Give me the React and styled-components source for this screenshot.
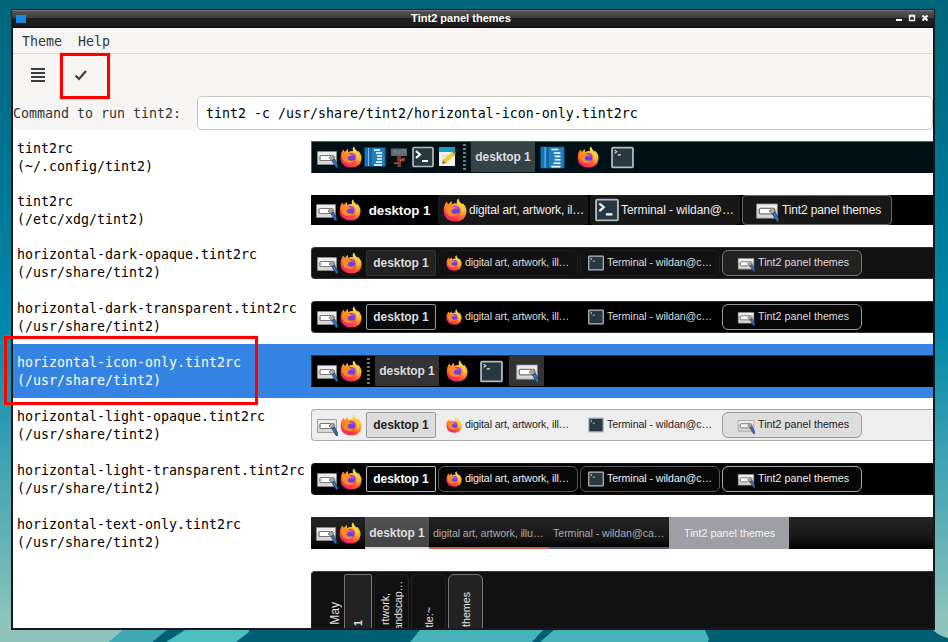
import React from "react";
import styled, { createGlobalStyle, css } from "styled-components";

const Global = createGlobalStyle`
  * { box-sizing: border-box; }
  body { margin: 0; overflow: hidden; }
`;

const Desktop = styled.div`
  position: relative;
  width: 948px;
  height: 642px;
  padding: 9px 13px 12px 11px;
  overflow: hidden;
  background: linear-gradient(#00667a 0, #007291 140px, #0089ab 330px, #3ba0b2 450px, #6db5b8 560px, #8ec4bb 620px);
`;

const Art = styled.svg`
  position: absolute;
  left: 0;
  bottom: 0;
`;

const Window = styled.div`
  position: relative;
  width: 924px;
  height: 621px;
  display: flex;
  flex-direction: column;
  border: solid #191919;
  border-width: 1px 2px 2px;
  background: #f6f5f3;
`;

const TitleBar = styled.div`
  flex: none;
  display: grid;
  grid-template-columns: 42px 1fr 42px;
  align-items: center;
  height: 18px;
  padding: 0 2px 0 3px;
  margin: 0 -1px;
  background: linear-gradient(#777 0 1px, #555 1px, #3c3c3c 8px, #202020 8px, #1c1c1c 16px, #111 16px);
`;

const AppMark = styled.span`
  width: 10px;
  height: 8px;
  margin-left: 1px;
  background: #1b87e5;
`;

const Title = styled.span`
  margin-top: -3px;
  padding-right: 25px;
  text-align: center;
  color: #fff;
  font: bold 11px/14px "Liberation Sans", sans-serif;
  letter-spacing: 0.02px;
`;

const WindowButtons = styled.svg`
  display: block;
  width: 42px;
  height: 18px;
`;

const mono = css`
  font-family: "DejaVu Sans Mono", monospace;
  font-size: 13.29px;
  line-height: 18px;
  white-space: pre;
`;

const MenuBar = styled.div`
  flex: none;
  display: flex;
  align-items: center;
  gap: 16px;
  height: 26px;
  padding: 2px 0 0 9px;
  border-bottom: 1px solid #d9d7d4;
  color: #32373a;
  ${mono}
`;

const ToolBar = styled.div`
  flex: none;
  display: flex;
  align-items: center;
  gap: 29px;
  height: 42px;
  padding-left: 18px;
`;

const CommandRow = styled.div`
  flex: none;
  display: flex;
  align-items: center;
  justify-content: space-between;
  height: 34px;
  color: #32373a;
  ${mono}
`;

const CommandLabel = styled.span`
  padding-top: 2px;
`;

const CommandField = styled.div`
  width: 736px;
  height: 34px;
  padding: 8px 8px 6px;
  border: 1px solid #cdc7c2;
  border-radius: 5px;
  background: #fff;
  color: #000;
`;

const List = styled.div`
  flex: 1;
  min-height: 0;
  overflow: hidden;
  background: #fff;
`;

const Row = styled.div`
  display: flex;
  align-items: center;
  height: ${(p) => p.$h || 54}px;
  padding-left: 4px;
  background: ${(p) => (p.$selected ? "#3584e4" : "#fff")};
  color: ${(p) => (p.$selected ? "#fff" : "#000")};
`;

const Name = styled.div`
  flex: none;
  width: 294px;
  padding-top: 2px;
  ${mono}
`;

const Panel = styled.div`
  flex: 1;
  display: flex;
  align-items: center;
  height: ${(p) => p.$h || 32}px;
  padding-left: ${(p) => p.$pad || 5}px;
  background: ${(p) => p.$bg || "#000"};
  border-top: 1px solid ${(p) => p.$line || "transparent"};
  border-bottom: 1px solid ${(p) => p.$lineBottom || p.$line || "transparent"};
  border-left: 1px solid ${(p) => p.$line || "transparent"};
  border-radius: ${(p) => p.$radius || 0}px 0 0 ${(p) => p.$radius || 0}px;
  font-family: "Liberation Sans", sans-serif;
`;

const Launchers = styled.div`
  display: flex;
  gap: 2px;
`;

const Glyph = styled.svg`
  flex: none;
  display: block;
  width: ${(p) => p.$s || 22}px;
  height: ${(p) => p.$s || 22}px;
`;

const Dots = styled.div`
  width: 3px;
  height: 30px;
  margin: 0 5px 0 ${(p) => p.$ml}px;
  background: repeating-linear-gradient(transparent 0 2px, #777 2px 4px);
`;

const Pager = styled.div`
  flex: none;
  width: ${(p) => p.$w || 64}px;
  height: ${(p) => p.$h || 30}px;
  margin-left: ${(p) => p.$ml || 0}px;
  display: flex;
  align-items: center;
  justify-content: center;
  background: ${(p) => p.$bg || "transparent"};
  border: ${(p) => (p.$line ? `1px solid ${p.$line}` : "0")};
  border-radius: ${(p) => (p.$line ? 2 : 0)}px;
  color: ${(p) => p.$fg || "#ddd"};
  font-size: ${(p) => p.$size || 12}px;
  font-weight: bold;
  letter-spacing: -0.08px;
  white-space: nowrap;
`;

const Task = styled.div`
  flex: none;
  width: ${(p) => p.$w || 140}px;
  height: ${(p) => p.$h || 26}px;
  margin-left: 2px;
  padding-left: ${(p) => (p.$pl ?? 7)}px;
  display: flex;
  align-items: center;
  gap: ${(p) => p.$gap ?? 3}px;
  background: ${(p) => p.$bg || "transparent"};
  border: 1px solid ${(p) => p.$line || "transparent"};
  border-radius: ${(p) => p.$radius || 6}px;
  color: ${(p) => p.$fg || "#ddd"};
  font-size: ${(p) => p.$size || 10.67}px;
  white-space: nowrap;
`;

const Label = styled.span`
  padding-bottom: ${(p) => p.$lift ?? 2}px;
  letter-spacing: ${(p) => p.$track || 0}px;
`;

const IconCell = styled.div`
  flex: none;
  width: 35px;
  height: 30px;
  display: flex;
  align-items: center;
  justify-content: center;
  background: ${(p) => (p.$on ? "#333" : "transparent")};
`;

const TextTask = styled.div`
  flex: none;
  width: 120px;
  height: 32px;
  padding: 1px 0 0 ${(p) => p.$pl}px;
  display: flex;
  align-items: center;
  border-bottom: 2px solid ${(p) => p.$line};
  background: ${(p) => p.$bg || "transparent"};
  color: ${(p) => p.$fg || "#aaa"};
  font-size: 10.67px;
  white-space: nowrap;
`;

const VPanel = styled.div`
  flex: 1;
  align-self: flex-start;
  display: flex;
  align-items: flex-start;
  gap: 2px;
  height: 70px;
  margin-top: 11px;
  padding: 2px 0 0 16px;
  background: #111;
  border-top: 1px solid #383c3a;
  border-left: 1px solid #222;
  border-radius: 4px 0 0 0;
  font-family: "Liberation Sans", sans-serif;
`;

const VCell = styled.div`
  flex: none;
  display: flex;
  justify-content: center;
  gap: 1px;
  width: ${(p) => p.$w}px;
  height: 70px;
  border: 1px solid ${(p) => p.$line || "transparent"};
  border-radius: ${(p) => p.$radius || 6}px;
  background: ${(p) => p.$bg || "transparent"};
`;

const VText = styled.span`
  writing-mode: vertical-rl;
  transform: rotate(180deg);
  align-self: flex-start;
  margin-top: ${(p) => p.$top}px;
  color: #e4e4e4;
  font-size: ${(p) => p.$size || 10.67}px;
  font-weight: ${(p) => (p.$bold ? "bold" : "normal")};
  letter-spacing: ${(p) => p.$track || 0}px;
  line-height: 12px;
  white-space: nowrap;
`;

const Marker = styled.div`
  position: absolute;
  left: ${(p) => p.$x}px;
  top: ${(p) => p.$y}px;
  width: ${(p) => p.$w}px;
  height: ${(p) => p.$h}px;
  border: 3px solid #fe0000;
  box-shadow: 0 0 1px #ff7777;
`;

const Tint = ({ s }) => (
  <Glyph $s={s} viewBox="0 0 22 22">
    <path d="M1.500 5.500h19v13h-19z" fill="#d8d8d8" stroke="#8d8d8d" strokeWidth=".8" />
    <path d="M2 6h18v4H2z" fill="#ececec" />
    <rect x="4" y="9.500" width="14" height="5" rx="1" fill="#fff" stroke="#797979" strokeWidth="1.200" />
    <path d="m13 12 2.500-2.500 3 3-2 2.500z" fill="#aaa" stroke="#67625c" strokeWidth=".8" />
    <path d="m16 14.500 2.500-1.500 3 6v2.500h-1.500z" fill="#3f6fb5" stroke="#193b70" strokeWidth=".8" />
    <path d="m15 9 2 2.500" stroke="#d79a70" />
  </Glyph>
);

const Fox = ({ s }) => (
  <Glyph $s={s} viewBox="0 0 22 22">
    <defs>
      <linearGradient id="foxBody" x1=".85" y1="0" x2=".25" y2="1">
        <stop offset="0" stopColor="#fff44f" />
        <stop offset=".4" stopColor="#ffa62a" />
        <stop offset=".72" stopColor="#ff4a38" />
        <stop offset="1" stopColor="#f01784" />
      </linearGradient>
    </defs>
    <path d="M3 3.500 5 6Q6 4 8 3v3q3-1.500 5-1Q12 2 14 .500q.500 3 3.500 5l1-.500Q22 9 21.500 13 20.500 21.500 11.500 21.500 2 21.500 .6 13 .2 8 3 3.500z" fill="url(#foxBody)" />
    <circle cx="11" cy="11.500" r="4.500" fill="#7040df" />
    <path d="M10 8q4-2 6 2-2-1-3 1-3-1-3-3z" fill="#b346e8" />
    <path d="M2 8.500q3-2.500 6-1.500l4 2-3.500 1.500-1 2q1.500 3.500 6 1.500-.500 3-5 3-6-.500-6.500-8.500z" fill="#ff8a22" />
    <path d="M14 .500q.500 5 4.500 8 1.500 5-1.500 8 2-5-1-9-3.500-3-2-7z" fill="#ffdb3d" />
  </Glyph>
);

const Term = ({ s, big }) => (
  <Glyph $s={s} viewBox="0 0 22 22">
    <rect x="1" y="1.500" width="20" height="19" rx="1" fill="#263842" stroke="#b5babd" strokeWidth="1.700" />
    {big ? (
      <path d="m4 5 4 3.500L4 12M10 15h6" fill="none" stroke="#fff" strokeWidth="2" />
    ) : (
      <path d="m3.500 4 2 1.500-2 1.500M6.500 8.500h3" fill="none" stroke="#dce4e6" strokeWidth="1" />
    )}
  </Glyph>
);

const Files = ({ s }) => (
  <Glyph $s={s} viewBox="0 0 22 22">
    <path d="M.5 1.500h21v19H.5z" fill="#1674b8" />
    <path d="M4.500 2v18" stroke="#79b9e4" />
    <path d="M7 2.500h13v17H7z" fill="#2480bd" />
    <path d="M10 4h6M12 7h6M13 10h5M13 13h5M12 16h6M10 19h8" stroke="#fff" strokeWidth="1.400" />
    <path d="M7 2v18" stroke="#0c5589" />
  </Glyph>
);

const Sign = () => (
  <Glyph viewBox="0 0 22 22">
    <path d="M3 2.500h16v7.500H3z" fill="#62696e" />
    <path d="m5 8 2-4 2 4m2-4v4m3-4v4m0-4h3v3" fill="none" stroke="#858c90" strokeWidth=".8" />
    <path d="M9.500 10h3.500v11H9.500z" fill="#6b4530" />
    <path d="M9 12h8v3H9z" fill="#7b3a2a" />
    <path d="m6 17 4 .500m2-3 4-1" stroke="#e44a20" strokeWidth="1.500" />
  </Glyph>
);

const Note = () => (
  <Glyph viewBox="0 0 22 22">
    <path d="M3 2h16v18H3z" fill="#f2f1eb" />
    <path d="M3 1h16v5H3z" fill="#189dc1" />
    <path d="M6 10h8M6 13h6" stroke="#ccc" />
    <path d="m6 18 1-4 9-8 3 3-9 8z" fill="#f0cd2b" />
    <path d="m6 18 1-4 3 3zM16 6l2-1 2 2-1 2z" fill="#8a7a5c" />
  </Glyph>
);

const Pair = () => (
  <Launchers>
    <Tint />
    <Fox />
  </Launchers>
);

function Entry({ name, path, h, selected, children }) {
  return (
    <Row $h={h} $selected={selected}>
      <Name>
        {name}
        {"\n"}
        {path}
      </Name>
      {children}
    </Row>
  );
}

function ThreeTasks({ bg, line, pager, pagerLine, task, taskLine, active, activeLine, fg, pagerFg }) {
  return (
    <Panel $pad={4} $bg={bg} $line={line} $radius={4}>
      <Pair />
      <Pager $w={70} $h={26} $ml={4} $bg={pager} $line={pagerLine} $fg={pagerFg}>desktop 1</Pager>
      <Task $bg={task} $line={taskLine} $fg={fg}>
        <Fox s={16} />
        <Label $track={-0.14}>digital art, artwork, ill…</Label>
      </Task>
      <Task $bg={task} $line={taskLine} $fg={fg}>
        <Term s={16} />
        <Label $track={-0.08}>Terminal - wildan@c…</Label>
      </Task>
      <Task $bg={active} $line={activeLine} $fg={fg} $pl={14}>
        <Tint s={18} />
        <Label $track={0.05}>Tint2 panel themes</Label>
      </Task>
    </Panel>
  );
}

export default function App() {
  const share = "(/usr/share/tint2)";
  return (
    <Desktop>
      <Global />
      <Art width="948" height="14" viewBox="0 628 948 14">
        <path d="M126 628h809v2l13 8v4H109z" fill="#005e73" />
        <path d="M123 630h44l-15 12h-43z" fill="#3fa8b0" />
        <path d="M185 630h64v2l-13 10h-70z" fill="#4ebfc0" />
        <path d="M420 630h285l4 9-1 3H410z" fill="#45b3b8" />
        <path d="M543 630h11l-14 12h-8z" fill="#005e73" />
        <path d="M933 630h15v8q-9-2-15-8z" fill="#8ec4bb" />
      </Art>
      <Window>
        <TitleBar>
          <AppMark />
          <Title>Tint2 panel themes</Title>
          <WindowButtons viewBox="0 0 42 18">
            <path d="M6 10h6" stroke="#fff" strokeWidth="2" />
            <path d="M19.500 5.500h5v5h-5zM19 6h6" fill="none" stroke="#fff" strokeWidth="1.300" />
            <path d="m32.500 5.500 5 5m0-5-5 5" stroke="#fff" strokeWidth="2" />
          </WindowButtons>
        </TitleBar>
        <MenuBar>
          <span>Theme</span>
          <span>Help</span>
        </MenuBar>
        <ToolBar>
          <Glyph $s={14} viewBox="0 0 14 14">
            <path d="M0 1h14M0 5h14M0 9h14M0 13h14" stroke="#3d3d3d" strokeWidth="2" />
          </Glyph>
          <Glyph $s={14} viewBox="0 0 14 14">
            <path d="m1.500 7.500 3.500 3.500 7-8" fill="none" stroke="#3d3d3d" strokeWidth="2.200" />
          </Glyph>
        </ToolBar>
        <CommandRow>
          <CommandLabel>Command to run tint2:</CommandLabel>
          <CommandField>tint2 -c /usr/share/tint2/horizontal-icon-only.tint2rc</CommandField>
        </CommandRow>
        <List>
          <Entry name="tint2rc" path="(~/.config/tint2)">
            <Panel $bg="#001014" $line="#526762" $lineBottom="#001014" $pad={4}>
              <Launchers><Tint /><Fox /><Files /><Sign /><Term big /><Note /></Launchers>
              <Dots $ml={5} />
              <Pager $bg="#354246">desktop 1</Pager>
              <IconCell><Files s={25} /></IconCell>
              <IconCell><Fox s={22} /></IconCell>
              <IconCell><Term s={23} /></IconCell>
            </Panel>
          </Entry>
          <Entry name="tint2rc" path="(/etc/xdg/tint2)" h={52}>
            <Panel $h={30} $pad={3}>
              <Pair />
              <Pager $w={73} $ml={2} $fg="#fff" $size={13.33}>desktop 1</Pager>
              <Task $w={150} $h={30} $bg="#171717" $line="#1d1d1d" $radius={4} $size={12} $pl={4} $gap={2} $fg="#eee">
                <Fox s={24} />
                <Label $lift={0} $track={-0.14}>digital art, artwork, il…</Label>
              </Task>
              <Task $w={150} $h={30} $bg="#171717" $line="#1d1d1d" $radius={4} $size={12} $pl={4} $gap={2} $fg="#eee">
                <Term s={24} big />
                <Label $lift={0} $track={-0.07}>Terminal - wildan@…</Label>
              </Task>
              <Task $w={150} $h={30} $bg="#171717" $line="#666" $radius={4} $size={12} $pl={12} $gap={3} $fg="#eee">
                <Tint s={24} />
                <Label $lift={0} $track={-0.14}>Tint2 panel themes</Label>
              </Task>
            </Panel>
          </Entry>
          <Entry name="horizontal-dark-opaque.tint2rc" path={share}>
            <ThreeTasks bg="#111" line="#333" pager="#222" pagerLine="#333" taskLine="#1d1d1d" active="#222" activeLine="#777" />
          </Entry>
          <Entry name="horizontal-dark-transparent.tint2rc" path={share}>
            <ThreeTasks bg="#000" line="#333" pager="#080808" pagerLine="#999" active="#080808" activeLine="#999" />
          </Entry>
          <Entry name="horizontal-icon-only.tint2rc" path={share} selected>
            <Panel $line="#333" $lineBottom="#000" $pad={4}>
              <Pair />
              <Dots $ml={5} />
              <Pager $bg="#333">desktop 1</Pager>
              <IconCell><Fox s={22} /></IconCell>
              <IconCell><Term s={23} /></IconCell>
              <IconCell $on><Tint s={24} /></IconCell>
            </Panel>
          </Entry>
          <Entry name="horizontal-light-opaque.tint2rc" path={share}>
            <ThreeTasks bg="#eee" line="#aaa" pager="#ddd" pagerLine="#999" active="#ddd" activeLine="#999" fg="#222" pagerFg="#222" />
          </Entry>
          <Entry name="horizontal-light-transparent.tint2rc" path={share}>
            <ThreeTasks bg="#000" line="#151515" pager="#080808" pagerLine="#bbb" task="#080808" taskLine="#555" active="#080808" activeLine="#aaa" fg="#eee" pagerFg="#fff" />
          </Entry>
          <Entry name="horizontal-text-only.tint2rc" path={share}>
            <Panel $pad={3} $bg="linear-gradient(#242424, #171717 65%, #000) border-box">
              <Pair />
              <Pager $ml={4} $h={32} $bg="linear-gradient(#525252, #434343 30px, #ddd 30px)">desktop 1</Pager>
              <TextTask $pl={4} $line="#d55f4d"><Label $lift={0} $track={-0.12}>digital art, artwork, illu…</Label></TextTask>
              <TextTask $pl={4} $line="#535e69"><Label $lift={0} $track={-0.06}>Terminal - wildan@ca…</Label></TextTask>
              <TextTask $pl={15} $line="#9d9fa4" $bg="#9d9fa4" $fg="#f5f5f5"><Label $lift={0} $track={0.05}>Tint2 panel themes</Label></TextTask>
            </Panel>
          </Entry>
          <Row $h={68}>
            <Name />
            <VPanel>
              <VCell $w={14}><VText $top={27} $size={12}>May</VText></VCell>
              <VCell $w={28} $line="#777" $radius={2} $bg="#222"><VText $top={45} $bold>1</VText></VCell>
              <VCell $w={35} $line="#222"><VText $top={18}>rtwork,</VText><VText $top={6} $track={-0.2}>andscap…</VText></VCell>
              <VCell $w={35} $line="#222"><VText $top={32}>tle:~</VText></VCell>
              <VCell $w={35} $line="#777" $bg="#222"><VText $top={17}>themes</VText></VCell>
            </VPanel>
          </Row>
        </List>
      </Window>
      <Marker $x={60} $y={53} $w={50} $h={46} />
      <Marker $x={4} $y={336} $w={254} $h={69} />
    </Desktop>
  );
}
